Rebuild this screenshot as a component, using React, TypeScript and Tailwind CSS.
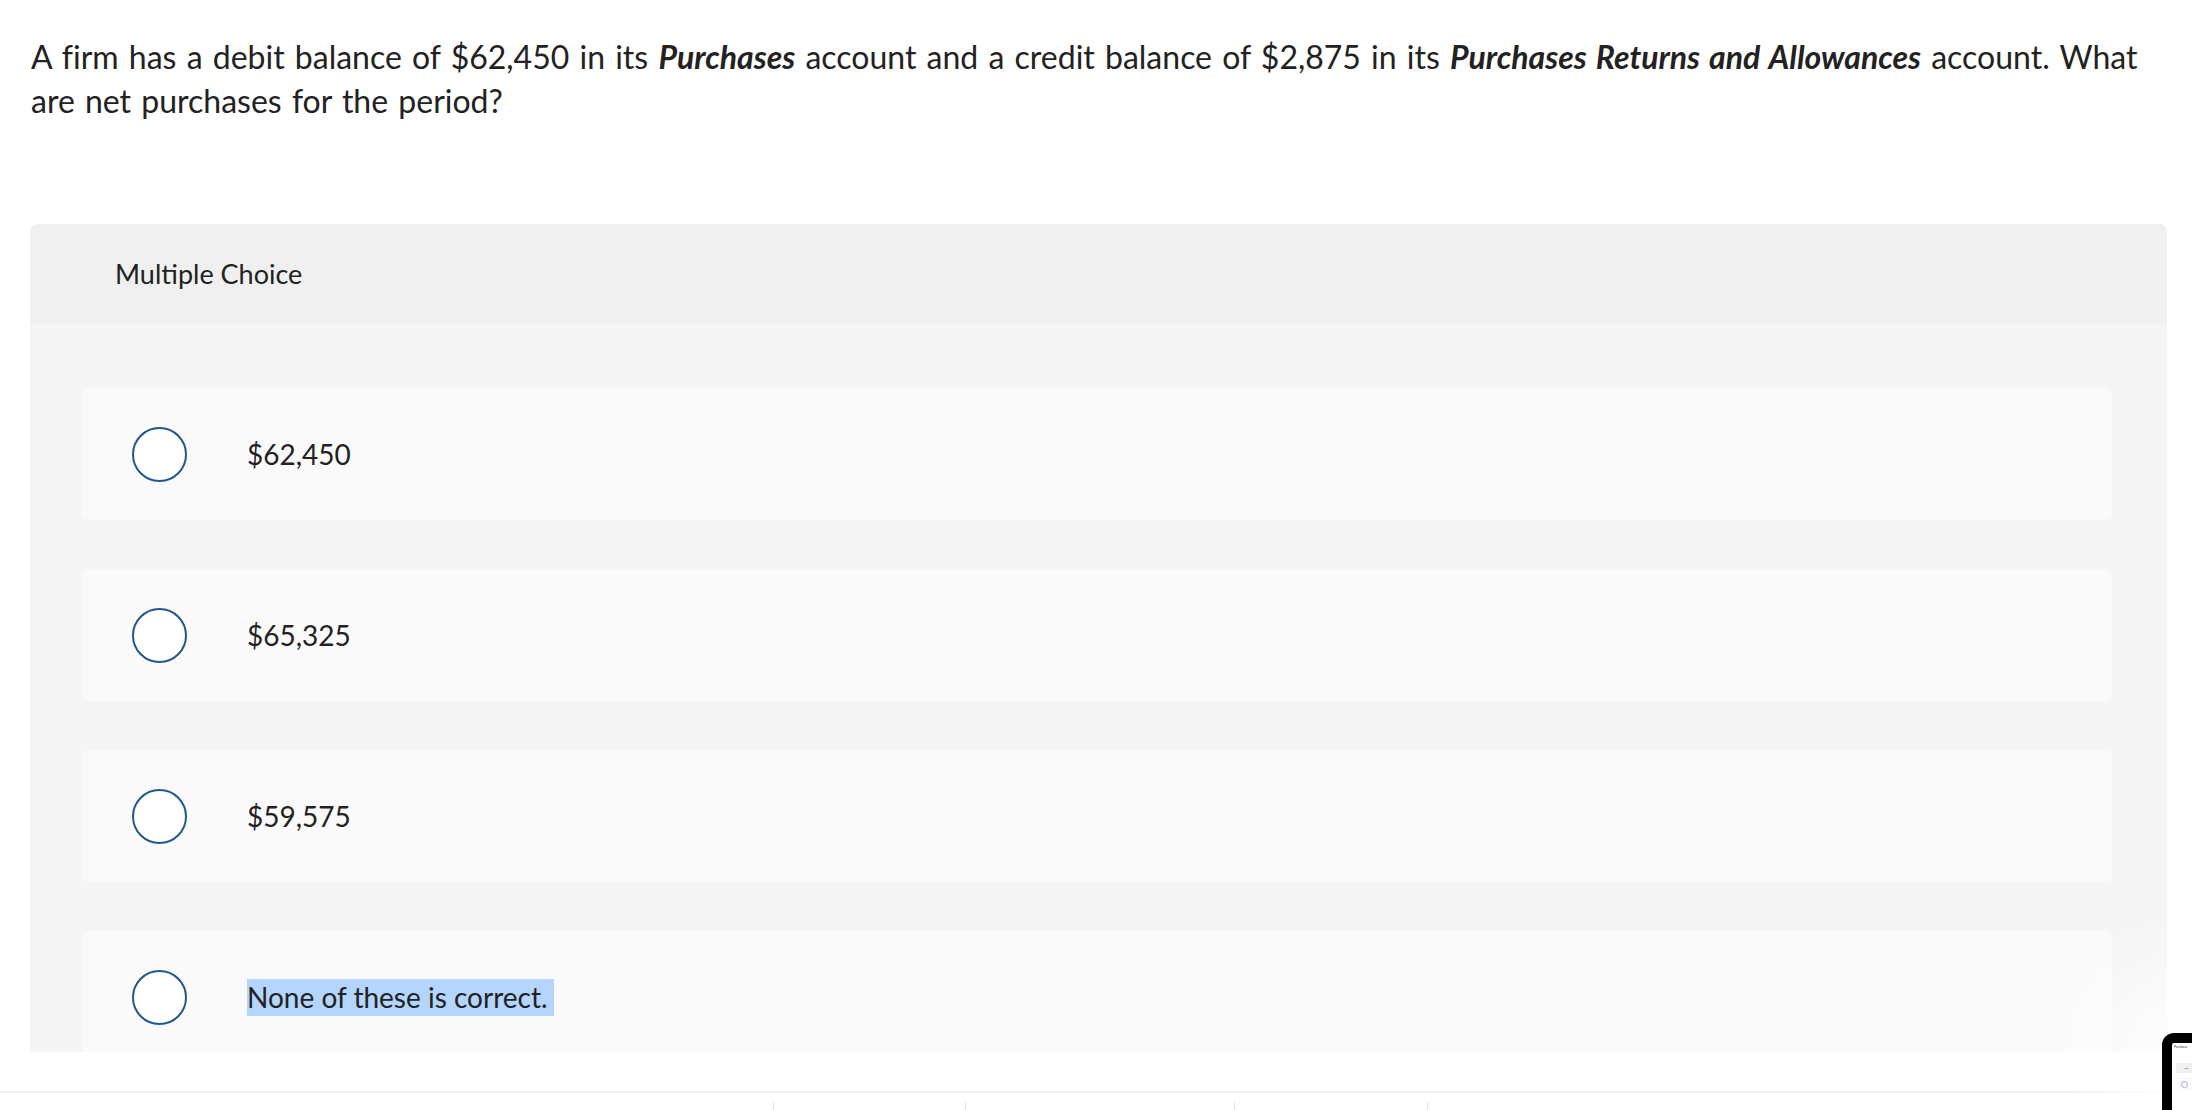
import React from "react";

const options = ["$62,450", "$65,325", "$59,575", "None of these is correct."];

export default function App() {
  return (
    <div
      className="relative h-[1110px] w-[2192px] overflow-hidden bg-white text-[#222222]"
      style={{ fontFamily: "Lato, 'Liberation Sans', sans-serif" }}
    >
      <div className="pl-[31px] pr-[20px] pt-[35px] text-[32px] leading-[44px] [word-spacing:2px] [font-variant-ligatures:none]">
        A firm has a debit balance of $62,450 in its <b className="font-bold italic">Purchases</b> account and a
        credit balance of $2,875 in its <b className="font-bold italic">Purchases Returns and Allowances</b> account.
        What are net purchases for the period?
      </div>

      <div className="ml-[30px] mt-[101px] w-[2137px]">
        <div className="flex h-[100px] items-center rounded-t-[8px] bg-[#f0f0f0] pl-[85px] text-[27px]">
          Multiple Choice
        </div>
        <div className="flex h-[728px] flex-col gap-[49px] overflow-hidden bg-[#f5f5f5] pl-[52px] pr-[55px] pt-[64px]">
          {options.map((o, i) => (
            <div
              key={o}
              className="flex h-[132px] shrink-0 items-center rounded-[6px] bg-[#fafafa] pl-[50px]"
            >
              <div className="h-[55px] w-[55px] shrink-0 rounded-full border-2 border-[#22578b] bg-white" />
              <div className="ml-[60px] text-[28px]">
                {i === 3 ? (
                  <span className="inline-block h-[37px] bg-[#b4d5fe] pr-[6px] leading-[37px]">{o}</span>
                ) : (
                  o
                )}
              </div>
            </div>
          ))}
        </div>
      </div>

      <div className="mt-[39px] h-[2px] w-full bg-[#efefef]" />
      <div className="flex h-[17px] items-end">
        <div className="w-[773px]" />
        <div className="h-[8px] w-[1px] bg-[#e6e6e6]" />
        <div className="w-[191px]" />
        <div className="h-[8px] w-[1px] bg-[#e6e6e6]" />
        <div className="w-[268px]" />
        <div className="h-[8px] w-[1px] bg-[#e6e6e6]" />
        <div className="w-[192px]" />
        <div className="h-[8px] w-[1px] bg-[#e6e6e6]" />
      </div>

      <div className="absolute left-[2162px] top-[1033px] h-[120px] w-[140px] rounded-[12px] border-[10px] border-black bg-white shadow-[0_0_90px_60px_rgba(255,255,255,0.85)]">
        <div className="pl-[2px] pt-[2px] text-[3px] leading-[4px] text-[#333]">Purchases</div>
        <div className="ml-[4px] mt-[14px] h-[10px] w-[40px] bg-[#f0f0f0] pl-[8px] text-[2px] leading-[10px]">Mult</div>
        <div className="ml-[6px] mt-[4px] flex h-[14px] w-[40px] items-center bg-[#fafafa] pl-[3px]">
          <div className="h-[7px] w-[7px] rounded-full border border-[#9fb4c9]" />
        </div>
      </div>
    </div>
  );
}
